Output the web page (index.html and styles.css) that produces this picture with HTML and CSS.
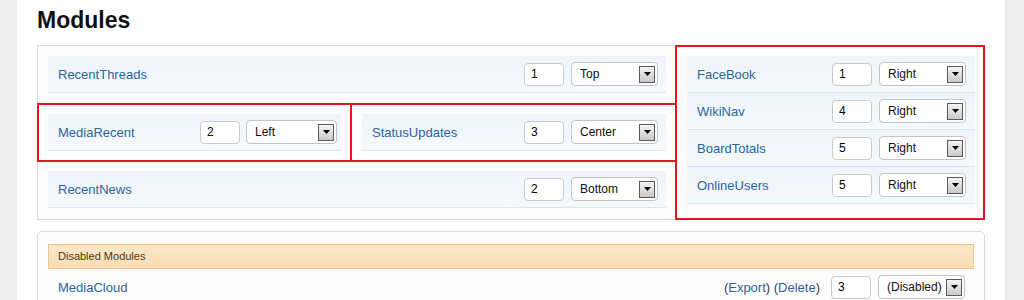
FILE: index.html
```html
<!DOCTYPE html>
<html>
<head>
<meta charset="utf-8">
<link rel="stylesheet" href="styles.css">
</head>
<body>
<div class="page">
  <h1 class="title">Modules</h1>
  <div class="panel layout">
    <div class="zone zone-top">
      <div class="row">
        <a class="name">RecentThreads</a>
        <input class="num" type="text" value="1">
        <div class="sel"><span class="val">Top</span><span class="btn"><svg width="7" height="4" viewBox="0 0 7 4"><path d="M0 0h7L3.5 4z" fill="#000"/></svg></span></div>
      </div>
    </div>
    <div class="zone zone-left marked">
      <div class="row">
        <a class="name">MediaRecent</a>
        <input class="num num-narrow" type="text" value="2">
        <div class="sel sel-wide"><span class="val">Left</span><span class="btn"><svg width="7" height="4" viewBox="0 0 7 4"><path d="M0 0h7L3.5 4z" fill="#000"/></svg></span></div>
      </div>
    </div>
    <div class="zone zone-center marked">
      <div class="row">
        <a class="name">StatusUpdates</a>
        <input class="num" type="text" value="3">
        <div class="sel"><span class="val">Center</span><span class="btn"><svg width="7" height="4" viewBox="0 0 7 4"><path d="M0 0h7L3.5 4z" fill="#000"/></svg></span></div>
      </div>
    </div>
    <div class="zone zone-bottom">
      <div class="row">
        <a class="name">RecentNews</a>
        <input class="num" type="text" value="2">
        <div class="sel"><span class="val">Bottom</span><span class="btn"><svg width="7" height="4" viewBox="0 0 7 4"><path d="M0 0h7L3.5 4z" fill="#000"/></svg></span></div>
      </div>
    </div>
    <div class="zone zone-right marked">
      <div class="row">
        <a class="name">FaceBook</a>
        <input class="num" type="text" value="1">
        <div class="sel"><span class="val">Right</span><span class="btn"><svg width="7" height="4" viewBox="0 0 7 4"><path d="M0 0h7L3.5 4z" fill="#000"/></svg></span></div>
      </div>
      <div class="row">
        <a class="name">WikiNav</a>
        <input class="num" type="text" value="4">
        <div class="sel"><span class="val">Right</span><span class="btn"><svg width="7" height="4" viewBox="0 0 7 4"><path d="M0 0h7L3.5 4z" fill="#000"/></svg></span></div>
      </div>
      <div class="row">
        <a class="name">BoardTotals</a>
        <input class="num" type="text" value="5">
        <div class="sel"><span class="val">Right</span><span class="btn"><svg width="7" height="4" viewBox="0 0 7 4"><path d="M0 0h7L3.5 4z" fill="#000"/></svg></span></div>
      </div>
      <div class="row">
        <a class="name">OnlineUsers</a>
        <input class="num" type="text" value="5">
        <div class="sel"><span class="val">Right</span><span class="btn"><svg width="7" height="4" viewBox="0 0 7 4"><path d="M0 0h7L3.5 4z" fill="#000"/></svg></span></div>
      </div>
    </div>
  </div>

  <div class="panel disabled">
    <div class="dis-head">Disabled Modules</div>
    <div class="row plain">
      <a class="name">MediaCloud</a>
      <span class="actions">(<a>Export</a>) (<a>Delete</a>)</span>
      <input class="num" type="text" value="3">
      <div class="sel"><span class="val">(Disabled)</span><span class="btn"><svg width="7" height="4" viewBox="0 0 7 4"><path d="M0 0h7L3.5 4z" fill="#000"/></svg></span></div>
    </div>
  </div>
</div>
</body>
</html>
```

FILE: styles.css
```css
html, body {
  margin: 0;
  padding: 0;
  background: #ececec;
  height: 100%;
}
body {
  font-family: "Liberation Sans", Arial, sans-serif;
  font-size: 13px;
  color: #222;
}
.page {
  margin: 0 19px 0 17px;
  background: #fff;
  min-height: 100%;
  padding: 0 20px;
  box-sizing: border-box;
}
.title {
  margin: 0;
  padding-top: 6px;
  font-size: 23px;
  line-height: 28px;
  font-weight: bold;
  color: #111;
  height: 28px;
}
.panel {
  border: 1px solid #d6dbe1;
  background: #fdfdfe;
}
.layout {
  margin-top: 11px;
  display: grid;
  grid-template-columns: 313px 325px 308px;
  grid-template-rows: 58px 57px 58px;
}
.zone {
  padding: 10px;
  box-sizing: border-box;
}
.zone-top { grid-column: 1 / 3; grid-row: 1; padding-right: 10px; }
.zone-left { grid-column: 1; grid-row: 2; padding-right: 10px; }
.zone-center { grid-column: 2; grid-row: 2; padding-left: 11px; padding-right: 10px; }
.zone-bottom { grid-column: 1 / 3; grid-row: 3; }
.zone-right { grid-column: 3; grid-row: 1 / 4; padding: 10px 9px 10px 11px; }
.marked {
  outline: 2px solid #e2161f;
  outline-offset: -1px;
  position: relative;
  z-index: 1;
}
.row {
  display: flex;
  align-items: center;
  height: 36px;
  border-bottom: 1px solid #d9e6f2;
  background: linear-gradient(to bottom, #eef4fa, #f6f9fc);
  padding: 0 8px 0 10px;
}
.name {
  color: #2a649b;
  font-size: 13px;
  flex: 1;
  text-decoration: none;
}
.num {
  width: 40px;
  height: 23px;
  box-sizing: border-box;
  border: 1px solid #c9c9c9;
  border-radius: 4px;
  padding: 0 0 0 6px;
  margin: 0 7px 0 0;
  font-family: "Liberation Sans", Arial, sans-serif;
  font-size: 12px;
  color: #000;
  background: #fff;
}
.num-narrow { margin-right: 6px; }
.sel {
  width: 87px;
  height: 24px;
  box-sizing: border-box;
  border: 1px solid #c4c4c4;
  border-radius: 4px;
  background: #fff;
  display: flex;
  align-items: center;
  justify-content: space-between;
  padding: 0 2px 0 8px;
  font-size: 12px;
  color: #111;
}
.sel-wide { width: 91px; }
.zone-left .row { padding-right: 4px; }
.btn {
  width: 14px;
  height: 15px;
  border: 1px solid #5a5a5a;
  background: linear-gradient(to bottom, #f4f4f4, #c9c9c9);
  display: flex;
  align-items: center;
  justify-content: center;
}
.zone-right .row { padding-right: 9px; }
.disabled {
  margin-top: 11px;
  border-radius: 5px;
  padding: 12px 10px 0 10px;
}
.dis-head {
  height: 23px;
  line-height: 23px;
  border: 1px solid #e9c690;
  background: linear-gradient(to bottom, #fbe7c9, #f8dcb2);
  color: #4e3a18;
  font-size: 11px;
  padding-left: 9px;
}
.row.plain {
  background: none;
  border-bottom: none;
  padding-right: 9px;
}
.actions {
  color: #2f3f55;
  font-size: 13px;
  margin-right: 11px;
}
.actions a {
  color: #2a649b;
}
```
